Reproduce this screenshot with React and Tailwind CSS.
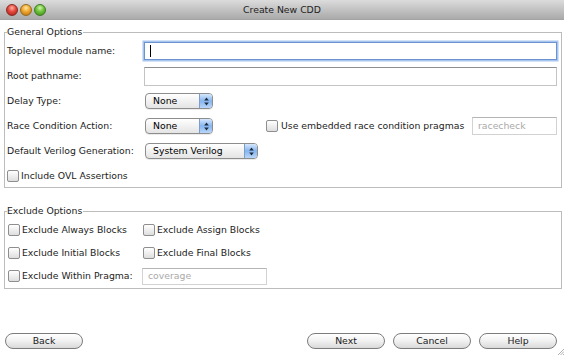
import React from 'react'

const font = { fontFamily: '"DejaVu Sans", Verdana, sans-serif' }

function Light({ tone }) {
  const tones = {
    red: 'bg-[radial-gradient(circle_at_50%_30%,#ffb0a0_0%,#e2463c_45%,#a81d16_100%)] border-[#8a2a22]',
    amber: 'bg-[radial-gradient(circle_at_50%_30%,#ffe6a0_0%,#eea72e_45%,#b06e0e_100%)] border-[#9a6a1c]',
    green: 'bg-[radial-gradient(circle_at_50%_30%,#d4f5a6_0%,#6cc23c_45%,#3d8a18_100%)] border-[#3f7a22]',
  }
  return <div className={`w-[12px] h-[12px] rounded-full border ${tones[tone]}`} />
}

function Check() {
  return (
    <div className="w-[12px] h-[12px] shrink-0 rounded-[2px] border border-[#8e8e8e] bg-gradient-to-b from-white to-[#dedede]" />
  )
}

function Arrows() {
  return (
    <div className="w-[13px] h-full flex items-center justify-center border-l border-[#7d9cc8] rounded-r-[3px] bg-gradient-to-b from-[#d6e7fc] via-[#86b5ef] to-[#b9d6f8]">
      <svg width="5" height="9" viewBox="0 0 5 9">
        <path d="M2.5 0.5 L4.8 3.5 L0.2 3.5 Z" fill="#1e2a3a" />
        <path d="M2.5 8.5 L4.8 5.5 L0.2 5.5 Z" fill="#1e2a3a" />
      </svg>
    </div>
  )
}

function Select({ value, width }) {
  return (
    <div
      className={`${width} h-[16px] ml-[1px] flex items-center rounded-[4px] border border-[#8d8d8d] bg-gradient-to-b from-white to-[#e4e4e4] shadow-[0_1px_0_rgba(0,0,0,0.08)]`}
    >
      <span className="flex-1 pl-[7px] text-black leading-none">{value}</span>
      <Arrows />
    </div>
  )
}

function Button({ label }) {
  return (
    <div className="w-[78px] h-[16px] flex items-center justify-center rounded-full border border-[#7c7c7c] bg-gradient-to-b from-white via-[#f1f1f1] to-[#d9d9d9] text-[#1a1a1a] leading-none">
      {label}
    </div>
  )
}

export default function App() {
  return (
    <div
      className="w-[564px] h-[356px] flex flex-col bg-white text-[9.3px] text-[#1c1c1c] overflow-hidden"
      style={font}
    >
      {/* title bar */}
      <div className="h-[20px] shrink-0 grid grid-cols-[1fr_auto_1fr] items-center border-b border-[#a3a3a3] bg-gradient-to-b from-[#dcdcdc] to-[#aaaaaa]">
        <div className="flex items-center gap-[2px] pl-[6px]">
          <Light tone="red" />
          <Light tone="amber" />
          <Light tone="green" />
        </div>
        <div className="text-[#222] leading-none">Create New CDD</div>
        <div />
      </div>

      <div className="flex-1 flex flex-col pl-[4px] pr-[2px]">
        {/* General Options */}
        <fieldset className="mt-[6px] border border-[#bcbcbc] px-[2px]">
          <legend className="leading-[12px] pr-[1px]">General Options</legend>
          <div className="flex flex-col gap-[5px] pt-[3px] pb-[1px] pr-[2px]">
            <div className="h-[20px] flex items-center">
              <span className="w-[137px] shrink-0">Toplevel module name:</span>
              <div className="flex-1 h-[18px] flex items-center border border-[#6a93cf] shadow-[0_0_0_1.5px_#a7c5ee]">
                <span className="ml-[5px] w-[1px] h-[12px] bg-black" />
              </div>
            </div>
            <div className="h-[20px] flex items-center">
              <span className="w-[137px] shrink-0">Root pathname:</span>
              <div className="flex-1 h-[19px] border border-[#c4c4c4] border-t-[#8f8f8f]" />
            </div>
            <div className="h-[20px] flex items-center">
              <span className="w-[137px] shrink-0">Delay Type:</span>
              <Select value="None" width="w-[68px]" />
            </div>
            <div className="h-[20px] flex items-center">
              <span className="w-[137px] shrink-0">Race Condition Action:</span>
              <Select value="None" width="w-[68px]" />
              <div className="ml-[53px] flex items-center gap-[3px]">
                <Check />
                <span>Use embedded race condition pragmas</span>
              </div>
              <div className="ml-auto w-[85px] h-[18px] flex items-center pl-[5px] border border-[#d2d2d2] border-t-[#b5b5b5] text-[#a9a9a9]">
                racecheck
              </div>
            </div>
            <div className="h-[20px] flex items-center">
              <span className="w-[137px] shrink-0">Default Verilog Generation:</span>
              <Select value="System Verilog" width="w-[113px]" />
            </div>
            <div className="h-[20px] flex items-center gap-[2px]">
              <Check />
              <span>Include OVL Assertions</span>
            </div>
          </div>
        </fieldset>

        {/* Exclude Options */}
        <fieldset className="mt-[17px] border border-[#bcbcbc] px-[2px]">
          <legend className="leading-[12px] pr-[1px]">Exclude Options</legend>
          <div className="flex flex-col gap-[3px] pt-[3px] pb-[2px]">
            <div className="h-[20px] flex items-center">
              <div className="w-[135px] flex items-center gap-[2px] pl-[1px]">
                <Check />
                <span>Exclude Always Blocks</span>
              </div>
              <div className="flex items-center gap-[2px] pl-[1px]">
                <Check />
                <span>Exclude Assign Blocks</span>
              </div>
            </div>
            <div className="h-[20px] flex items-center">
              <div className="w-[135px] flex items-center gap-[2px] pl-[1px]">
                <Check />
                <span>Exclude Initial Blocks</span>
              </div>
              <div className="flex items-center gap-[2px] pl-[1px]">
                <Check />
                <span>Exclude Final Blocks</span>
              </div>
            </div>
            <div className="h-[20px] flex items-center">
              <div className="w-[135px] flex items-center gap-[2px] pl-[1px]">
                <Check />
                <span>Exclude Within Pragma:</span>
              </div>
              <div className="w-[125px] h-[17px] flex items-center pl-[5px] border border-[#d2d2d2] border-t-[#b5b5b5] text-[#a9a9a9]">
                coverage
              </div>
            </div>
          </div>
        </fieldset>

        <div className="flex-1" />
      </div>

      {/* buttons */}
      <div className="h-[23px] shrink-0 flex items-start pl-[5px]">
        <Button label="Back" />
        <div className="flex-1" />
        <div className="flex gap-[8px]">
          <Button label="Next" />
          <Button label="Cancel" />
          <Button label="Help" />
        </div>
        <svg className="self-end mb-[1px] ml-[1px]" width="6" height="10" viewBox="0 0 6 10">
          <path d="M0 10 L6 4 M2.5 10 L6 6.5 M5 10 L6 9" stroke="#9a9a9a" strokeWidth="0.8" />
        </svg>
      </div>
    </div>
  )
}
